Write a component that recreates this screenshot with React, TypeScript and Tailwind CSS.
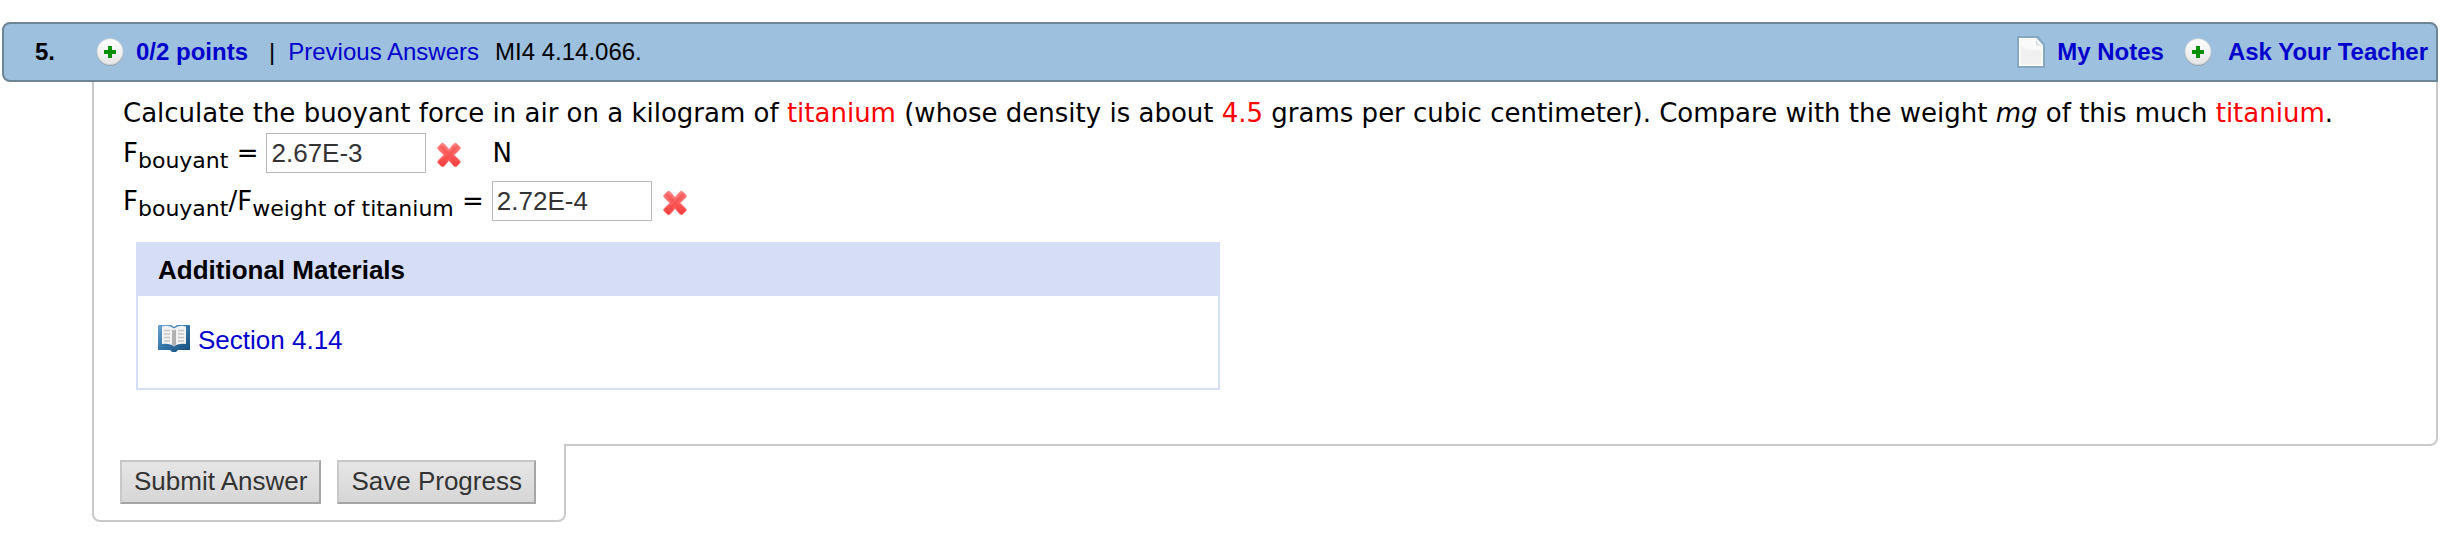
import { useState } from 'react';

function PlusIcon() {
  return (
    <svg aria-hidden="true" className="h-7 w-7 shrink-0" viewBox="0 0 28 28">
      <defs>
        <linearGradient id="plus-face" x1="0" x2="0" y1="0" y2="1">
          <stop offset="0" stopColor="#ffffff" />
          <stop offset="1" stopColor="#e6e6e6" />
        </linearGradient>
      </defs>
      <circle cx="14" cy="14.5" fill="#9aa4ab" r="13.3" />
      <circle cx="14" cy="13.5" fill="#d3d9dd" r="13.3" />
      <circle cx="14" cy="13.5" fill="url(#plus-face)" r="12.3" />
      <path d="M12 8h4v4h4v4h-4v4h-4v-4H8v-4h4z" fill="#0a8f0a" />
    </svg>
  );
}

function NoteIcon() {
  return (
    <svg aria-hidden="true" className="h-8 w-7 shrink-0" viewBox="0 0 28 32">
      <path d="M0 0h21l7 8v24H0z" fill="#86a8c3" />
      <path d="M2 2h17.500l6.500 7.500V30H2z" fill="#fafafa" />
      <path d="M4 28V10c6 6 12 3 20 4v14z" fill="#f1f1f1" />
      <path d="M19 2v7.500h7z" fill="#d9dcdf" />
      <path d="M19 2l7 7.500-5-1.500z" fill="#ffffff" />
    </svg>
  );
}

function WrongIcon() {
  return (
    <svg
      aria-label="Incorrect"
      className="mt-1 h-7 w-[26px] shrink-0"
      role="img"
      viewBox="0 0 28 28"
    >
      <defs>
        <linearGradient id="wrong-fill" x1="0" x2="0" y1="0" y2="1">
          <stop offset="0" stopColor="#ff8080" />
          <stop offset="0.55" stopColor="#ff5c5c" />
          <stop offset="1" stopColor="#ee3a3a" />
        </linearGradient>
      </defs>
      <path
        d="M2 5.500 6 1.500q1.500-.8 3 .7l5 6 5-6q1.500-1.500 3-.7l4 4q.7 1.500-.5 2.800L19.500 14l6 5.700q1.200 1.300.5 2.800l-4 4q-1.500.8-3-.7l-5-5.800-5 5.800q-1.500 1.500-3 .7l-4-4q-.7-1.500.5-2.800L8.500 14l-6-5.700Q1.300 7 2 5.500z"
        fill="url(#wrong-fill)"
        stroke="#ff8f8f"
        strokeWidth="1"
      />
      <path
        d="M6 5.500 22 22.500M22 5.500 6 22.500"
        stroke="#f24848"
        strokeLinecap="round"
        strokeOpacity="0.5"
        strokeWidth="3"
      />
    </svg>
  );
}

function BookIcon() {
  return (
    <svg aria-hidden="true" className="h-7 w-8 shrink-0" viewBox="0 0 32 28">
      <defs>
        <linearGradient id="book-cover" x1="0" x2="1" y1="0" y2="1">
          <stop offset="0" stopColor="#6ba6cd" />
          <stop offset="0.5" stopColor="#3273a6" />
          <stop offset="1" stopColor="#174c7c" />
        </linearGradient>
      </defs>
      <path
        d="M0 2Q0 1 1 1h12l3 2 3-2h12q1 0 1 1v24H20l-2 2h-4l-2-2H0z"
        fill="url(#book-cover)"
      />
      <path
        d="M4 2.500Q11 .5 16 4.500q5-4 12-2V20q-8-1-12 2.500Q12 19 4 20z"
        fill="#f2f2f2"
      />
      <path d="M14 5.500l2 1 2-1v15l-2 2-2-2z" fill="#b0b0b0" />
      <path
        d="M6 6.500h6M6 10h6M6 13.500h6M6 17h6M20 6.500h6M20 10h6M20 13.500h6M20 17h6"
        stroke="#c6c6c6"
        strokeWidth="1.500"
      />
    </svg>
  );
}

type AnswerInputProps = {
  id: string;
  value: string;
  onChange: (value: string) => void;
};

function AnswerInput({ id, value, onChange }: AnswerInputProps) {
  return (
    <input
      className="mr-[10px] ml-2 h-10 w-40 border border-[#b8b8b8] bg-white px-1 font-['Liberation_Sans',Arial,sans-serif] text-[26px] text-[#333]"
      id={id}
      onChange={(event) => onChange(event.target.value)}
      type="text"
      value={value}
    />
  );
}

const actionClass =
  'h-11 cursor-pointer border-2 border-t-[#c8c8c8] border-r-[#a6a6a6] border-b-[#a6a6a6] border-l-[#c8c8c8] bg-linear-to-b from-[#e6e6e6] to-[#d6d6d6] px-3 pb-[2px] text-[26px] leading-8 text-[#333]';

export default function App() {
  const [force, setForce] = useState('2.67E-3');
  const [ratio, setRatio] = useState('2.72E-4');

  return (
    <main className="bg-white pt-[22px] pr-3 pl-[2px] font-['Liberation_Sans',Arial,sans-serif] text-black">
      <header className="flex h-[60px] items-center justify-between rounded-l-lg rounded-tr-lg border-2 border-[#6c8594] bg-[#9dc0de] pr-2 text-2xl">
        <div className="flex items-center">
          <span className="w-[92px] pl-[31px] font-bold">5.</span>
          <PlusIcon />
          <a className="ml-3 font-bold text-[#0000cd]" href="#points">
            0/2 points
          </a>
          <span className="mr-[13px] ml-[21px]">|</span>
          <a className="text-[#0000cd]" href="#previous">
            Previous Answers
          </a>
          <span className="ml-4">MI4 4.14.066.</span>
        </div>
        <nav className="flex items-center font-bold text-[#0000cd]">
          <a className="flex items-center gap-3" href="#notes">
            <NoteIcon />
            My Notes
          </a>
          <a className="ml-5 flex items-center gap-4" href="#ask">
            <PlusIcon />
            Ask Your Teacher
          </a>
        </nav>
      </header>

      <form className="ml-[90px]" onSubmit={(event) => event.preventDefault()}>
        <section className="rounded-br-lg border-2 border-t-0 border-[#c9c9c9] pt-[15px] pb-[54px] pl-[29px] font-['DejaVu_Sans',Verdana,sans-serif] text-[26px] leading-8">
          <p>
            Calculate the buoyant force in air on a kilogram of{' '}
            <span className="text-[#ff0000]">titanium</span> (whose density is
            about <span className="text-[#ff0000]">4.5</span> grams per cubic
            centimeter). Compare with the weight <i>mg</i> of this much{' '}
            <span className="text-[#ff0000]">titanium</span>.
          </p>
          <div className="flex h-12 items-center">
            <label htmlFor="force">
              F<sub className="text-[22px]">bouyant</sub> =
            </label>
            <AnswerInput id="force" onChange={setForce} value={force} />
            <WrongIcon />
            <span className="ml-[30px]">N</span>
          </div>
          <div className="flex h-12 items-center">
            <label htmlFor="ratio">
              F<sub className="text-[22px]">bouyant</sub>/F
              <sub className="text-[22px]">weight of titanium</sub> =
            </label>
            <AnswerInput id="ratio" onChange={setRatio} value={ratio} />
            <WrongIcon />
          </div>

          <div className="mt-[17px] ml-[13px] w-[1084px] max-w-full border-2 border-[#d6ddf7] font-['Liberation_Sans',Arial,sans-serif]">
            <h2 className="bg-[#d6ddf7] px-5 py-[10px] font-bold">
              Additional Materials
            </h2>
            <div className="px-5 pt-7 pb-8">
              <a
                className="flex w-fit items-start gap-2 text-[#0000cd]"
                href="#section"
              >
                <BookIcon />
                Section 4.14
              </a>
            </div>
          </div>
        </section>

        <div className="relative -mt-[2px] flex w-fit gap-4 rounded-b-lg border-2 border-t-0 border-[#c9c9c9] bg-white pt-4 pr-7 pb-4 pl-[26px]">
          <button className={actionClass} type="submit">
            Submit Answer
          </button>
          <button className={actionClass} type="button">
            Save Progress
          </button>
        </div>
      </form>
    </main>
  );
}
